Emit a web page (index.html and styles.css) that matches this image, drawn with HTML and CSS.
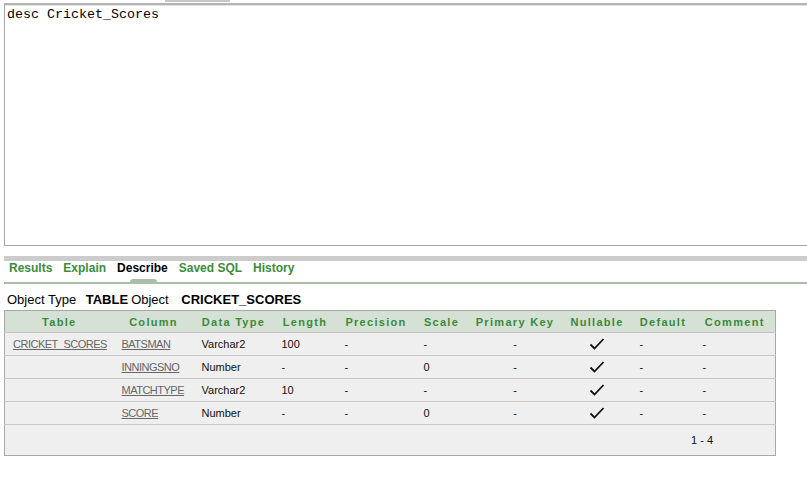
FILE: index.html
```html
<!DOCTYPE html>
<html>
<head>
<meta charset="utf-8">
<link rel="stylesheet" href="styles.css">
</head>
<body>
<div class="page">
  <div class="topstub"></div>
  <div class="editor">desc Cricket_Scores</div>
  <div class="splitter"></div>
  <div class="tabs">
    <span class="tab">Results</span>
    <span class="tab">Explain</span>
    <span class="tab active">Describe</span>
    <span class="tab">Saved SQL</span>
    <span class="tab">History</span>
  </div>
  <div class="tabline"><div class="marker"></div></div>
  <div class="objline">Object Type <b class="otype">TABLE</b>Object <b class="oname">CRICKET_SCORES</b></div>
  <table class="desc">
    <colgroup>
      <col class="c1"><col class="c2"><col class="c3"><col class="c4"><col class="c5">
      <col class="c6"><col class="c7"><col class="c8"><col class="c9"><col class="c10">
    </colgroup>
    <thead>
      <tr>
        <th>Table</th><th>Column</th><th>Data Type</th><th>Length</th><th>Precision</th>
        <th>Scale</th><th>Primary Key</th><th>Nullable</th><th>Default</th><th>Comment</th>
      </tr>
    </thead>
    <tbody>
      <tr>
        <td><a>CRICKET_SCORES</a></td><td><a>BATSMAN</a></td><td>Varchar2</td><td>100</td><td>-</td>
        <td>-</td><td class="ctr">-</td><td class="ctr"><svg class="chk" viewBox="0 0 16 14"><path d="M1.5 7.5 L5.5 11.5 L14.5 2" fill="none" stroke="#111" stroke-width="1.8"/></svg></td><td>-</td><td>-</td>
      </tr>
      <tr>
        <td></td><td><a>INNINGSNO</a></td><td>Number</td><td>-</td><td>-</td>
        <td>0</td><td class="ctr">-</td><td class="ctr"><svg class="chk" viewBox="0 0 16 14"><path d="M1.5 7.5 L5.5 11.5 L14.5 2" fill="none" stroke="#111" stroke-width="1.8"/></svg></td><td>-</td><td>-</td>
      </tr>
      <tr>
        <td></td><td><a>MATCHTYPE</a></td><td>Varchar2</td><td>10</td><td>-</td>
        <td>-</td><td class="ctr">-</td><td class="ctr"><svg class="chk" viewBox="0 0 16 14"><path d="M1.5 7.5 L5.5 11.5 L14.5 2" fill="none" stroke="#111" stroke-width="1.8"/></svg></td><td>-</td><td>-</td>
      </tr>
      <tr>
        <td></td><td><a>SCORE</a></td><td>Number</td><td>-</td><td>-</td>
        <td>0</td><td class="ctr">-</td><td class="ctr"><svg class="chk" viewBox="0 0 16 14"><path d="M1.5 7.5 L5.5 11.5 L14.5 2" fill="none" stroke="#111" stroke-width="1.8"/></svg></td><td>-</td><td>-</td>
      </tr>
      <tr class="foot">
        <td colspan="10"><span class="range">1 - 4</span></td>
      </tr>
    </tbody>
  </table>
</div>
</body>
</html>
```

FILE: styles.css
```css
html, body {
  margin: 0;
  padding: 0;
  background: #ffffff;
}
.page {
  position: relative;
  width: 807px;
  height: 481px;
  overflow: hidden;
  padding-left: 4px;
  box-sizing: border-box;
  font-family: "Liberation Sans", Arial, sans-serif;
}
.topstub {
  position: absolute;
  left: 165px;
  top: 0;
  width: 65px;
  height: 2px;
  background: #c8c8c8;
}
.editor {
  margin-top: 3px;
  height: 237px;
  width: 820px;
  border: 1px solid #a6a6a6;
  border-top: 2px solid #b4b4b4;
  box-sizing: content-box;
  padding: 3px 2px 0;
  font-family: "Liberation Mono", "Courier New", monospace;
  font-size: 13.33px;
  line-height: 14px;
  color: #000;
  box-shadow: inset 0 1px 0 #e2e2e2;
  white-space: pre;
}
.splitter {
  margin-top: 10px;
  height: 5px;
  background: #cccccc;
}
.tabs {
  display: flex;
  padding: 0 0 0 5px;
  height: 21px;
  box-sizing: border-box;
}
.tab {
  font-size: 12px;
  font-weight: bold;
  color: #3b8c3b;
  margin-right: 11px;
  line-height: 14px;
}
.tab.active {
  color: #000;
}
.tabline {
  position: relative;
  height: 2px;
  background: #a9bea8;
}
.marker {
  position: absolute;
  left: 126px;
  top: -3px;
  width: 27px;
  height: 3px;
  background: #a9bea8;
  border-radius: 3px 3px 0 0;
}
.objline {
  margin-top: 8px;
  padding-left: 3px;
  font-size: 13px;
  line-height: 15px;
  color: #000;
}
.otype {
  margin: 0 3px 0 6px;
}
.oname {
  margin-left: 9px;
}
.desc {
  margin-top: 3px;
  width: 771px;
  border-collapse: collapse;
  border: 1px solid #a8a8a8;
  table-layout: fixed;
  font-size: 11px;
}
.c1 { width: 109px; }
.c2 { width: 80px; }
.c3 { width: 80px; }
.c4 { width: 63px; }
.c5 { width: 79px; }
.c6 { width: 52px; }
.c7 { width: 95px; }
.c8 { width: 69px; }
.c9 { width: 63px; }
.c10 { width: 81px; }
.desc th {
  background: #d5e1d4;
  color: #3b8a3b;
  font-weight: bold;
  font-size: 11px;
  letter-spacing: 1.3px;
  text-align: center;
  height: 21px;
  padding: 0;
  border-bottom: 1px solid #c5c5c5;
  white-space: nowrap;
}
.desc td {
  background: #efefef;
  height: 22px;
  padding: 0 0 0 8px;
  border-bottom: 1px solid #c8c8c8;
  color: #111;
  white-space: nowrap;
}
.desc td.ctr {
  text-align: center;
  padding: 0;
}
.desc a {
  color: #666666;
  text-decoration: underline;
  letter-spacing: -0.5px;
}
.chk {
  width: 16px;
  height: 14px;
  display: inline-block;
  vertical-align: middle;
}
.desc tr.foot td {
  height: 30px;
  text-align: right;
  padding-right: 62px;
  border-bottom: none;
}
.range {
  font-size: 11px;
}
```
